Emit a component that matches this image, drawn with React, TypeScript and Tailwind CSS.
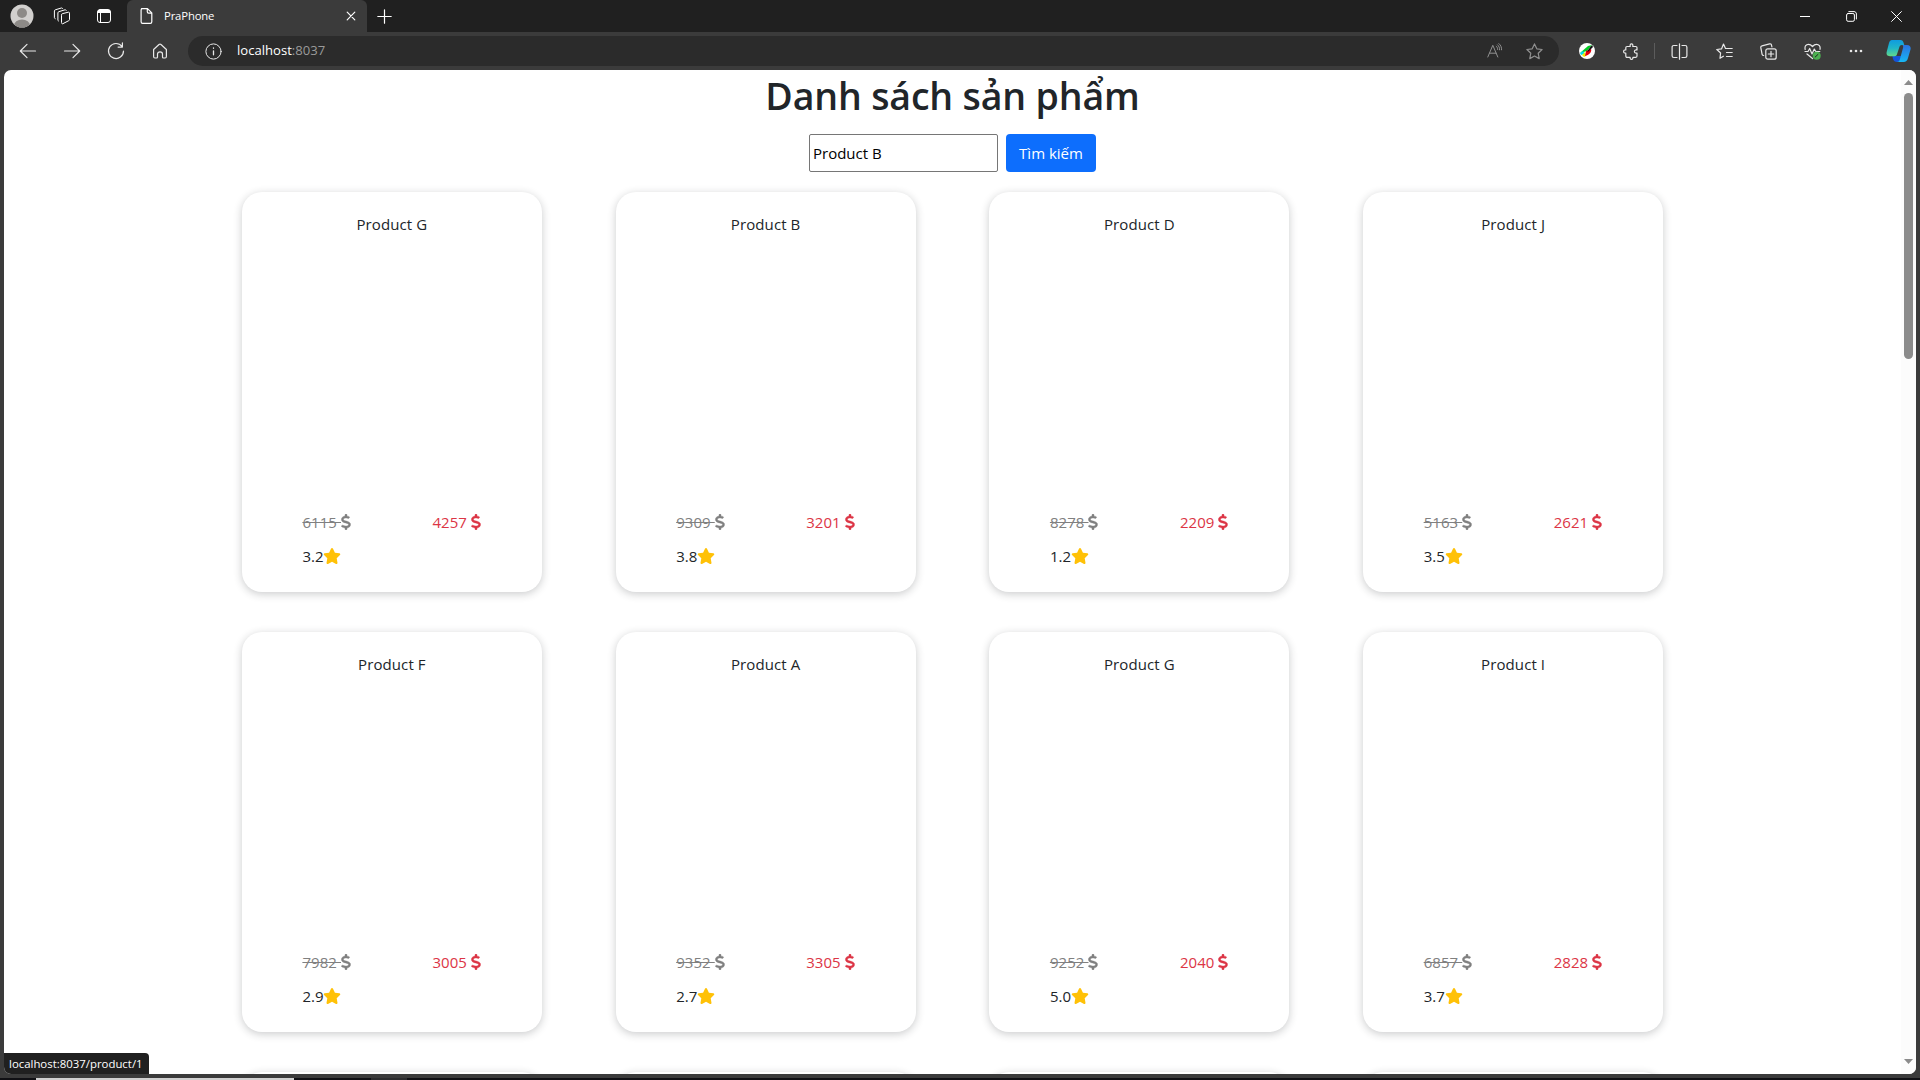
import React from "react";
import { FaDollarSign, FaStar } from "react-icons/fa6";

type Product = { name: string; old: string; price: string; rating: string };

const rows: Product[][] = [
  [
    { name: "Product G", old: "6115", price: "4257", rating: "3.2" },
    { name: "Product B", old: "9309", price: "3201", rating: "3.8" },
    { name: "Product D", old: "8278", price: "2209", rating: "1.2" },
    { name: "Product J", old: "5163", price: "2621", rating: "3.5" },
  ],
  [
    { name: "Product F", old: "7982", price: "3005", rating: "2.9" },
    { name: "Product A", old: "9352", price: "3305", rating: "2.7" },
    { name: "Product G", old: "9252", price: "2040", rating: "5.0" },
    { name: "Product I", old: "6857", price: "2828", rating: "3.7" },
  ],
  [
    { name: "", old: "", price: "", rating: "" },
    { name: "", old: "", price: "", rating: "" },
    { name: "", old: "", price: "", rating: "" },
    { name: "", old: "", price: "", rating: "" },
  ],
];

function Icon({ children, size = 16, className = "" }: { children: React.ReactNode; size?: number; className?: string }) {
  return (
    <svg
      width={size}
      height={size}
      viewBox={`0 0 ${size} ${size}`}
      fill="none"
      stroke="currentColor"
      strokeWidth="1"
      strokeLinecap="round"
      strokeLinejoin="round"
      className={`shrink-0 ${className}`}
    >
      {children}
    </svg>
  );
}

function TitleBar() {
  return (
    <div className="flex h-8 bg-[#202020] text-white">
      <div className="flex w-[127px] items-center pl-[10px]">
        <svg width="24" height="24" viewBox="0 0 24 24" className="shrink-0">
          <clipPath id="avatar">
            <circle cx="12" cy="12" r="11.5" />
          </clipPath>
          <g clipPath="url(#avatar)">
            <rect width="24" height="24" fill="#d2d0ce" />
            <circle cx="12" cy="9" r="5" fill="#8d8a87" />
            <ellipse cx="12" cy="21.5" rx="8" ry="6" fill="#8d8a87" />
          </g>
        </svg>
        <Icon size={18} className="ml-[19px]">
          <path d="M8.500 7.800c0-.6.300-1 .8-1.100l6-1.500c.7-.2 1.200.2 1.200.9v6.400c0 .6-.3 1-.8 1.200l-5.800 3c-.8.3-1.400-.1-1.400-.9Z" />
          <path d="M5.500 14c-.5-.2-.6-.5-.6-1V5.900c0-.6.300-1 .900-1.200L12 2.800c.6-.1 1 0 1.200.6" />
          <path d="M2.200 11.700c-.6-.2-.8-.6-.8-1.100V4c0-.6.300-1 .9-1.200L8.400 1c.6-.2 1 0 1.200.6" />
        </Icon>
        <Icon size={16} className="ml-[25px]">
          <rect x="1.500" y="1.500" width="13" height="13" rx="2.500" />
          <path d="M2 3.500h12M2 4.500h12M2.500 2.500h11" strokeWidth="1.200" />
          <path d="M4.500 5v9.500" />
        </Icon>
      </div>
      <div className="flex w-[240px] items-center rounded-t-[6px] bg-[#3b3b3b] pl-3 pr-[11px]">
        <Icon size={16}>
          <path d="M2.500.6h6l4.300 4.300v8.900c0 .9-.6 1.600-1.500 1.600H3.600c-.9 0-1.500-.7-1.500-1.600V2c0-.8.500-1.400 1.300-1.400ZM8.300.8v3c0 .8.500 1.300 1.300 1.300h3" strokeWidth="1.200" />
        </Icon>
        <span className="ml-[9px] flex-1 text-[11.300px] tracking-[-0.150px]">PraPhone</span>
        <Icon size={10}>
          <path d="m1.200 1.200 7.600 7.600m0-7.600L1.200 8.800" strokeWidth="1.200" />
        </Icon>
      </div>
      <div className="flex flex-1 items-center pl-[10px]">
        <Icon size={15}>
          <path d="M7.500.8v13.400M.8 7.500h13.400" strokeWidth="1.200" />
        </Icon>
      </div>
      <div className="flex w-[128px] items-center">
        <Icon size={10} className="ml-[8px]">
          <path d="M0 5.500h10" />
        </Icon>
        <Icon size={11} className="ml-[36px]">
          <rect x=".6" y="2.500" width="7.800" height="7.800" rx="1.500" />
          <path d="M2.800.6h5.200c1.400 0 2.400 1 2.400 2.400v5" />
        </Icon>
        <Icon size={11} className="ml-[34px]">
          <path d="m.6.6 9.800 9.800m0-9.800L.6 10.400" />
        </Icon>
      </div>
    </div>
  );
}

function Toolbar() {
  return (
    <div className="flex h-[38px] items-center bg-[#3b3b3b] text-[#e8e8e8]">
      <Icon size={18} className="ml-[19px]">
        <path d="M1.500 9h15M8 2.300 1.300 9 8 15.700" strokeWidth="1.200" />
      </Icon>
      <Icon size={18} className="ml-[26px]">
        <path d="M1.500 9h15M10 2.300 16.700 9 10 15.700" strokeWidth="1.200" />
      </Icon>
      <Icon size={18} className="ml-[26px]">
        <path d="M15 4.500A7.500 7.500 0 1 0 16.500 9M15.400.9v4.200h-4.300" strokeWidth="1.200" />
      </Icon>
      <Icon size={16} className="ml-[27px]">
        <path d="M1.600 6.500 7 1.500c.6-.5 1.400-.5 2 0l5.400 5v7c0 .9-.5 1.500-1.300 1.500h-1.600c-.6 0-1-.4-1-1v-3c0-1.300-1-2.200-2.500-2.200s-2.500.9-2.500 2.200v3c0 .6-.4 1-1 1H2.900c-.8 0-1.300-.6-1.300-1.500Z" strokeWidth="1.200" />
      </Icon>
      <div className="ml-5 flex h-[30px] w-[1371px] items-center rounded-full bg-[#2b2b2b] pl-[17px] pr-4">
        <Icon size={17}>
          <circle cx="8.500" cy="8.500" r="7.600" />
          <path d="M8.500 7.800v4M8.500 5v.3" strokeWidth="1.300" />
        </Icon>
        <span className="ml-[15px] flex-1 text-[13.100px] text-white">
          localhost<span className="text-[#9a9a9a]">:8037</span>
        </span>
        <Icon size={16} className="text-[#909090]">
          <path d="M.8 14 5.800 2.300 10.800 14M2.600 10.200H9M9.200 3.200c1 .8 1.600 2 1.500 3.300M10.500 1.800c1.500 1.300 2.300 3.200 2.100 5M11.900.6c1.900 1.600 2.900 3.900 2.700 6.200" />
        </Icon>
        <Icon size={17} className="ml-[23px] text-[#909090]">
          <path d="m8.500.9 2.300 4.900 5.300.7-3.900 3.700 1 5.400-4.700-2.600-4.700 2.600 1-5.400L.9 6.500l5.300-.7Z" strokeWidth="1.200" />
        </Icon>
      </div>
      <svg width="16" height="16" viewBox="0 0 16 16" className="ml-5 shrink-0">
        <clipPath id="ext">
          <circle cx="8" cy="8" r="8" />
        </clipPath>
        <g clipPath="url(#ext)">
          <rect width="16" height="16" fill="#fff" />
          <path d="M1 10 9 3l4-1-5 6Z" fill="#0c2" />
          <path d="m1 10 3-2 2 3-4 1Z" fill="#0de" />
          <path d="m3 12 3-3 1 4-2 1Z" fill="#ee0" />
          <path d="m6 13 1-5 5-2c1 2-1 6-6 7Z" fill="#e8000b" />
          <path d="m8 8.500 4-5.500 2-.8-.5 2.300L9.500 8.500Z" fill="#111" />
        </g>
      </svg>
      <Icon size={17} className="ml-7">
        <path d="M4 3.500h3.200c-.3-1.700.2-2.700 1.300-2.700s1.600 1 1.300 2.700h3c.7 0 1.200.5 1.200 1.200V7c-1.700-.3-2.600.3-2.600 1.500s.9 1.800 2.600 1.500v3.100c0 .7-.5 1.200-1.200 1.200H9.900c.1 1.400-.4 2.100-1.400 2.100s-1.500-.7-1.400-2.100H4c-.7 0-1.200-.5-1.200-1.200v-3C1.300 10.200.6 9.600.6 8.500S1.300 6.800 2.800 7V4.700c0-.7.500-1.200 1.200-1.200Z" strokeWidth="1.200" />
      </Icon>
      <div className="ml-[14px] h-4 w-px bg-[#5c5c5c]" />
      <Icon size={17} className="ml-4">
        <path d="M8.500.8v15.400M6 2.500H2.800c-1 0-1.700.7-1.700 1.700v8.600c0 1 .7 1.700 1.700 1.700H6M11 2.500h3.200c1 0 1.700.7 1.700 1.700v8.600c0 1-.7 1.700-1.700 1.700H11" strokeWidth="1.200" />
      </Icon>
      <Icon size={17} className="ml-7">
        <path d="M7.400 13.200 4 15.300l.6-5.300L.8 6.500l4.700-.6L7.500 1l2 4.500h6.700M10.500 9.500h5.700M10.500 13.500h5.700" strokeWidth="1.200" />
      </Icon>
      <Icon size={17} className="ml-[27px]">
        <rect x="5.800" y="5.800" width="10.400" height="10.400" rx="2" strokeWidth="1.200" />
        <path d="M11 8.300v5.400M8.300 11h5.400M3.700 12.500c-.8 0-1.400-.4-1.600-1.200L.8 4.700c-.2-.9.300-1.700 1.200-1.900L9.600.9c.9-.2 1.700.3 1.900 1.200l.4 1.700" strokeWidth="1.200" />
      </Icon>
      <Icon size={17} className="ml-[27px]">
        <path d="M1.200 6.500C.4 3.200 2.100 1.300 4.500 1.300c2 0 3 1 4 2.200 1-1.200 2-2.200 4-2.200 2.400 0 4.100 1.900 3.500 5M1 8.500h3l1.700-3L8 11l2.300-5 1.500 2.500h4M3 11l5.500 4.500" strokeWidth="1.200" />
        <circle cx="12.700" cy="12.800" r="4" fill="#4caf50" stroke="none" />
        <path d="m11.200 14 2.800-2.600" stroke="#222" />
      </Icon>
      <svg width="14" height="4" className="ml-7 shrink-0 fill-current">
        <circle cx="2" cy="2" r="1.300" />
        <circle cx="7" cy="2" r="1.300" />
        <circle cx="12" cy="2" r="1.300" />
      </svg>
      <svg width="25" height="24" viewBox="0 0 25 24" className="ml-[23px] shrink-0">
        <defs>
          <linearGradient id="ca" x1="0" y1="0" x2="0" y2="1">
            <stop offset="0" stopColor="#0f9be0" />
            <stop offset=".5" stopColor="#20b5c8" />
            <stop offset="1" stopColor="#62d98a" />
          </linearGradient>
          <linearGradient id="cb" x1="0" y1="0" x2="0" y2="1">
            <stop offset="0" stopColor="#2b72e0" />
            <stop offset="1" stopColor="#17b8f4" />
          </linearGradient>
        </defs>
        <path d="M13 17h3l-2 4c-.7 1.400-1.500 2-3 2-2 0-3.300-1-4-3l-.6-3Z" fill="#1553d8" />
        <path d="M6 1h8.500c1.500 0 2.300.7 2.800 2l1 3h-2.500c-1.300 0-2 .8-2.400 2l-2.500 7.500c-.4 1.200-1 1.700-2.300 1.700H4c-3 0-4-2-3.200-4.700L3 4C3.500 2 4.500 1 6 1Z" fill="url(#ca)" />
        <path d="M17.500 6H21c3 0 4.200 2 3.500 4.500L22 19c-.7 2.700-2 4-4.500 4H11c1.500 0 2.300-.9 2.800-2.500L17 9c.4-1.400.2-2.200-.6-3Z" fill="url(#cb)" />
      </svg>
    </div>
  );
}

function Card({ product }: { product: Product }) {
  return (
    <div className="flex h-[400px] w-[300px] flex-col rounded-[20px] bg-white shadow-[0_2px_8px_rgba(33,37,41,0.240)]">
      {product.name && (
        <>
          <div className="mt-5 text-center text-[15px] leading-6 tracking-[0.100px]">{product.name}</div>
          <div className="mt-[274px] flex h-6 items-center pl-[60.500px] leading-6">
            <div className="flex w-[130px] items-center text-[#808080]">
              <span className="whitespace-pre text-[15px] tracking-[0.080px] line-through">{product.old + " "}</span>
              <FaDollarSign className="h-4 w-[10px] stroke-current stroke-[14]" />
            </div>
            <div className="flex items-center text-[#dc3545]">
              <span className="whitespace-pre text-[15px] tracking-[0.080px]">{product.price + " "}</span>
              <FaDollarSign className="h-4 w-[10px] stroke-current stroke-[14]" />
            </div>
          </div>
          <div className="mt-[10px] flex h-6 items-center pl-[60.500px]">
            <span className="text-[15px]">{product.rating}</span>
            <FaStar className="h-4 w-[18px] text-[#ffc107]" />
          </div>
        </>
      )}
    </div>
  );
}

function ScrollBar() {
  return (
    <div className="flex w-[15px] flex-col items-center bg-[#fcfcfc]">
      <svg width="9" height="5" className="mt-[10px] fill-[#8b8b8b]">
        <path d="M4.500 0 9 5H0Z" />
      </svg>
      <div className="mt-2 h-[266px] w-[9px] rounded-full bg-[#8b8b8b]" />
      <div className="flex-1" />
      <svg width="9" height="5" className="mb-[10px] fill-[#8b8b8b]">
        <path d="M4.500 5 9 0H0Z" />
      </svg>
    </div>
  );
}

export default function App() {
  return (
    <div className="flex h-[1080px] w-[1920px] flex-col overflow-hidden bg-[#3b3b3b] font-['Open_Sans','Noto_Sans',sans-serif]">
      <TitleBar />
      <Toolbar />
      <div className="relative mx-1 flex h-[1004px] shrink-0 overflow-hidden rounded-[7px] bg-white text-[#212529]">
        <div className="flex flex-1 flex-col items-center">
          <h1 className="h-14 text-[37.500px] font-semibold leading-[52px] tracking-[-0.150px]">Danh sách sản phẩm</h1>
          <div className="mt-2 flex gap-2 pt-1">
            <input
              className="h-[38px] w-[189px] rounded-[2px] border border-[#767676] px-[3px] text-[15px] text-black"
              defaultValue="Product B"
            />
            <button className="h-[38px] w-[90px] rounded-[4px] bg-[#0d6efd] text-[15px] text-white">Tìm kiếm</button>
          </div>
          <div className="mt-5 grid w-[1495px] grid-cols-4 justify-items-center gap-y-10">
            {rows.flat().map((p, i) => (
              <Card key={i} product={p} />
            ))}
          </div>
        </div>
        <ScrollBar />
        <div className="absolute bottom-0 left-0 flex h-[21px] w-[145px] items-center rounded-tr-[4px] bg-[#202020] pl-[5px] text-[11.400px] text-white">
          localhost:8037/product/1
        </div>
      </div>
      <div className="h-1 shrink-0" />
      <div className="flex h-[2px] shrink-0 bg-[#101014]">
        <div className="ml-9 h-full w-[258px] bg-[#d0d0d0]" />
        <div className="ml-[77px] h-full w-9 bg-[#2c2c2e]" />
      </div>
    </div>
  );
}
